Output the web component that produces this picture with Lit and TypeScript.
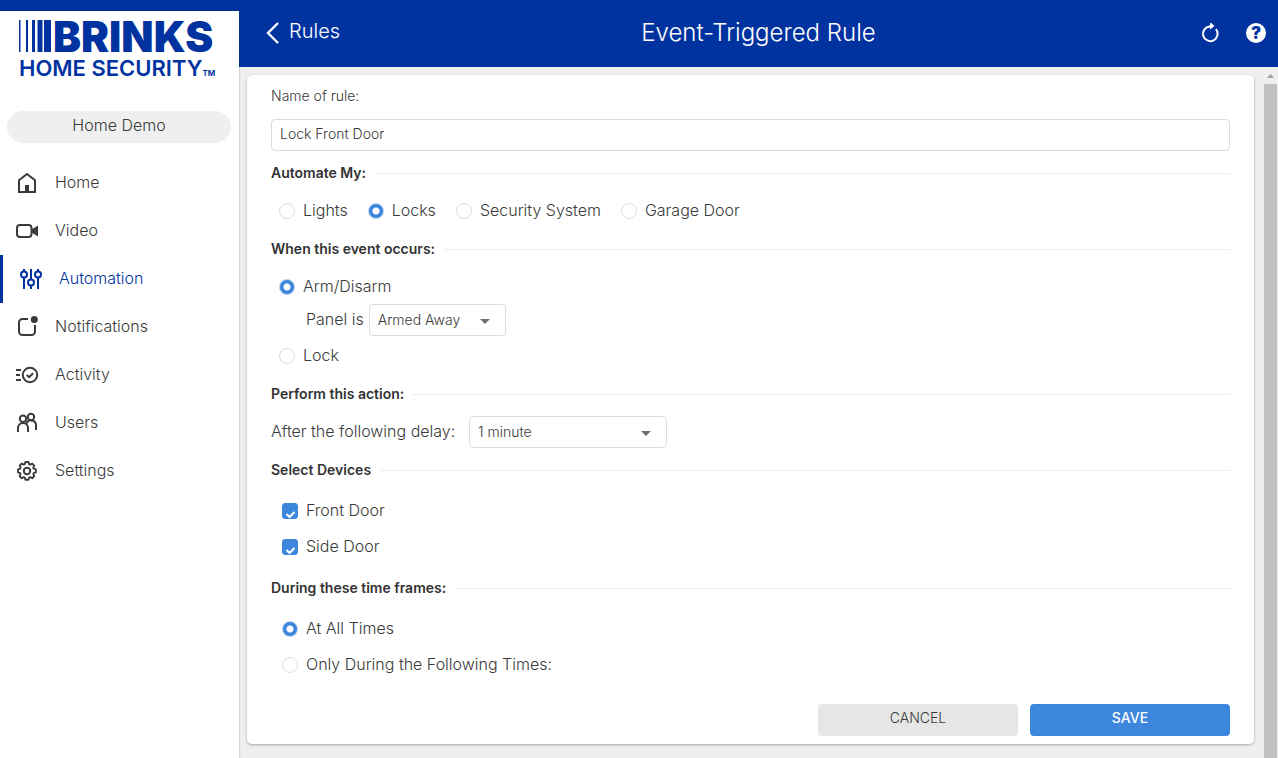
import { LitElement, html, css, svg } from "lit";
import { customElement, property, state } from "lit/decorators.js";
import { classMap } from "lit/directives/class-map.js";

const icons: Record<string, unknown> = {
  home: svg`<path d="M3 20V8.2L11 2l8 6.2V20z" fill="none" stroke="currentColor" stroke-width="2"/><path d="M9 13h4v7H9z" fill="currentColor"/>`,
  video: svg`<rect x="1" y="5" width="14.5" height="12" rx="3" fill="none" stroke="currentColor" stroke-width="2"/><path d="M15.500 9.500 22 5.500v11l-6.500-4z" fill="currentColor"/>`,
  automation: svg`<g fill="none" stroke="currentColor" stroke-width="2"><path d="M4 1v2.500M4 9.500V21M11 1v10.500M11 17.500V21M18 1v2.500M18 9.500V21"/><circle cx="4" cy="6.500" r="3"/><circle cx="11" cy="14.500" r="3"/><circle cx="18" cy="6.500" r="3"/></g>`,
  notifications: svg`<path d="M12 3H6.500A3.500 3.500 0 0 0 3 6.500v9A3.500 3.500 0 0 0 6.500 19h9a3.500 3.500 0 0 0 3.500-3.500V9" fill="none" stroke="currentColor" stroke-width="2"/><circle cx="18.300" cy="3.600" r="3.500" fill="currentColor"/>`,
  activity: svg`<g fill="none" stroke="currentColor" stroke-width="2"><path d="M0 6h5M0 11h4M0 16h5"/><circle cx="14" cy="11" r="7.200"/><path d="m10.800 11 2.300 2.200 4-4"/></g>`,
  users: svg`<g fill="none" stroke="currentColor" stroke-width="2"><circle cx="7" cy="6.800" r="3.200"/><circle cx="15" cy="5" r="3.200"/><path d="M2 20v-4a5 5 0 0 1 10 0v4M10.500 11.200A5 5 0 0 1 20 13.500V18"/></g>`,
  settings: svg`<g fill="none" stroke="currentColor" stroke-width="2" stroke-linejoin="round"><path d="M9.400 2.500h3.200l.7 2.300 1.200.5 2.100-1.100 2.200 2.200-1.100 2.100.5 1.200 2.300.7v3.200l-2.300.7-.5 1.200 1.100 2.100-2.200 2.200-2.100-1.100-1.200.5-.7 2.300H9.400l-.7-2.300-1.200-.5-2.100 1.100-2.200-2.200 1.100-2.100-.5-1.200-2.300-.7v-3.200l2.300-.7.5-1.200-1.100-2.100 2.200-2.200 2.100 1.100 1.200-.5z" transform="translate(.6 -.4) scale(.94)"/><circle cx="11" cy="11" r="3.200"/></g>`,
};

@customElement("side-nav")
export class SideNav extends LitElement {
  @property() current = "automation";

  static styles = css`
    :host { display: flex; flex-direction: column; background: #fff; box-shadow: 0 0 2px rgba(0, 0, 0, 0.35); color: #3a3a3a; }
    .logo { color: #0033a0; padding: 8px 0 0 19px; height: 60px; }
    .brand { display: flex; height: 34px; }
    .bars { flex: none; width: 34px; height: 34px; }
    .brinks { font: 900 42px/36px Inter, sans-serif; }
    .sub { display: flex; align-items: flex-end; font: 600 22px/30px Inter, sans-serif; }
    .tm { font: 700 8px/20px Inter, sans-serif; }
    .site { margin: 32px 8px 16px 7px; height: 32px; border: 0; border-radius: 16px; background: #efefef; font: inherit; color: inherit; padding: 0 0 4px; }
    .item { display: flex; align-items: center; gap: 17px; height: 48px; box-sizing: border-box; padding-left: 16px; color: inherit; text-decoration: none; }
    .item.active { border-left: 3px solid #0033a0; padding-left: 17px; color: #0033a0; }
    .icon { width: 22px; height: 22px; overflow: visible; }
    .label { padding-bottom: 2px; }
  `;

  render() {
    const items = ["Home", "Video", "Automation", "Notifications", "Activity", "Users", "Settings"];
    return html`
      <div class="logo">
        <div class="brand">
          <svg class="bars" viewBox="0 0 34 34" fill="currentColor" aria-hidden="true"><path d="M0 1h1.500v32H0zM7 1h2v32H7zM13 1h3v32h-3zM18.500 1h5v32h-5zM25 1h7v32h-7z"/></svg>
          <span class="brinks">BRINKS</span>
        </div>
        <div class="sub">HOME SECURITY<span class="tm">TM</span></div>
      </div>
      <button class="site">Home Demo</button>
      <nav>
        ${items.map((name) => {
          const id = name.toLowerCase();
          return html`<a href="#${id}" class=${classMap({ item: true, active: id === this.current })}>
            <svg class="icon" viewBox="0 0 22 22" aria-hidden="true">${icons[id]}</svg><span class="label">${name}</span>
          </a>`;
        })}
      </nav>
    `;
  }
}

@customElement("rule-form")
export class RuleForm extends LitElement {
  @state() private automate = "Locks";
  @state() private event = "Arm/Disarm";
  @state() private times = "At All Times";

  static styles = css`
    :host { display: block; background: #fff; border-radius: 5px; box-shadow: 0 1px 3px rgba(0, 0, 0, 0.3); padding: 11px 24px 8px; color: #3a3a3a; }
    .name { display: block; font-size: 14px; line-height: 20px; margin-bottom: 13px; }
    .text { display: block; width: 100%; height: 32px; box-sizing: border-box; border: 1px solid #dcdcdc; border-radius: 4px; padding: 0 8px 3px; font: inherit; font-size: 14px; color: inherit; margin-bottom: 12px; background: #fff; }
    .heading { display: flex; align-items: center; gap: 8px; margin: 0; font-size: 14px; line-height: 20px; font-weight: 600; color: #333; }
    .heading::after { content: ""; flex: 1; height: 1px; background: #eee; }
    .body { padding: 11px 8px; }
    .body.row { display: flex; flex-wrap: wrap; gap: 0 20px; }
    .body.delay { padding-left: 0; }
    .body.list { display: flex; flex-direction: column; gap: 2px; padding: 14px 11px; }
    .option { display: flex; align-items: center; gap: 8px; height: 34px; }
    .caption { padding-bottom: 3px; }
    .mark { appearance: none; flex: none; width: 16px; height: 16px; box-sizing: border-box; margin: 0; border: 1px solid #dedede; background: #fff; }
    .radio { border-radius: 50%; }
    .radio:checked { background: radial-gradient(circle, #fff 3px, #3c87dd 4px); border-color: #b5cdee; }
    .tick { display: grid; }
    .tick > * { grid-area: 1 / 1; }
    .check { border-radius: 3px; }
    .check:checked { background: #3c87dd; border-color: #3c87dd; }
    .checkmark { width: 16px; height: 16px; pointer-events: none; }
    .line { display: flex; align-items: center; gap: 5px; height: 34px; }
    .line.panel { height: 32px; padding-left: 27px; margin-bottom: 3px; }
    .delay .caption { min-width: 193px; }
    .drop { display: grid; align-items: center; }
    .drop > * { grid-area: 1 / 1; }
    .select { appearance: none; width: 137px; height: 32px; border: 1px solid #dcdcdc; border-radius: 4px; background: #fff; padding: 0 8px; font: inherit; font-size: 14px; color: inherit; }
    .wide .select { width: 198px; }
    .arrow { justify-self: end; width: 10px; height: 5px; margin: 2px 16px 0 0; fill: #707070; pointer-events: none; }
    .actions { display: flex; justify-content: flex-end; gap: 12px; margin-top: 8px; }
    .button { width: 200px; height: 32px; border: 0; border-radius: 4px; background: #e6e6e6; padding: 0 0 4px; font: inherit; font-size: 14px; color: inherit; }
    .save { background: #3c87dd; color: #fff; font-weight: 500; }
  `;

  private radio(group: string, name: string, current: string, pick: (v: string) => void) {
    return html`<label class="option">
      <input class="mark radio" type="radio" name=${group} .checked=${name === current} @change=${() => pick(name)} />
      <span class="caption">${name}</span>
    </label>`;
  }

  private arrow() {
    return html`<svg class="arrow" viewBox="0 0 10 5" aria-hidden="true"><path d="M0 0h10L5 5z"/></svg>`;
  }

  render() {
    return html`
      <label class="name" for="name">Name of rule:</label>
      <input class="text" id="name" type="text" value="Lock Front Door" />

      <h2 class="heading">Automate My:</h2>
      <div class="body row">
        ${["Lights", "Locks", "Security System", "Garage Door"].map((n) =>
          this.radio("automate", n, this.automate, (v) => (this.automate = v)))}
      </div>

      <h2 class="heading">When this event occurs:</h2>
      <div class="body">
        ${this.radio("event", "Arm/Disarm", this.event, (v) => (this.event = v))}
        <div class="line panel">
          <label class="caption" for="panel">Panel is</label>
          <span class="drop">
            <select class="select" id="panel"><option>Armed Away</option><option>Armed Stay</option><option>Disarmed</option></select>
            ${this.arrow()}
          </span>
        </div>
        ${this.radio("event", "Lock", this.event, (v) => (this.event = v))}
      </div>

      <h2 class="heading">Perform this action:</h2>
      <div class="body delay">
        <div class="line">
          <label class="caption" for="delay">After the following delay:</label>
          <span class="drop wide">
            <select class="select" id="delay"><option>1 minute</option><option>5 minutes</option></select>
            ${this.arrow()}
          </span>
        </div>
      </div>

      <h2 class="heading">Select Devices</h2>
      <div class="body list">
        ${["Front Door", "Side Door"].map((n) => html`<label class="option">
          <span class="tick">
            <input class="mark check" type="checkbox" checked />
            <svg class="checkmark" viewBox="0 0 16 16" aria-hidden="true"><path d="m4.500 11 3 3 5-5" fill="none" stroke="#fff" stroke-width="2"/></svg>
          </span>
          <span class="caption">${n}</span>
        </label>`)}
      </div>

      <h2 class="heading">During these time frames:</h2>
      <div class="body list">
        ${["At All Times", "Only During the Following Times:"].map((n) =>
          this.radio("times", n, this.times, (v) => (this.times = v)))}
      </div>

      <div class="actions">
        <button class="button">CANCEL</button>
        <button class="button save">SAVE</button>
      </div>
    `;
  }
}

@customElement("app-root")
export class AppRoot extends LitElement {
  static styles = css`
    :host { display: grid; grid-template-columns: 239px 1fr; min-height: 100vh; background: #0033a0; font: 300 16px/20px Inter, sans-serif; }
    .side { margin-top: 11px; z-index: 1; }
    .page { display: flex; flex-direction: column; min-width: 0; }
    .header { display: grid; grid-template-columns: 1fr auto 1fr; align-items: center; height: 67px; box-sizing: border-box; padding: 0 12px 2px; color: #fff; }
    .back { display: flex; align-items: center; gap: 10px; padding-left: 15px; color: inherit; text-decoration: none; font-size: 20px; }
    .back svg { width: 13px; height: 22px; }
    .back span { padding-bottom: 3px; }
    .title { margin: 0; font-size: 24px; line-height: 28px; font-weight: 300; }
    .tools { display: flex; justify-content: flex-end; align-items: center; gap: 26px; }
    .tool { display: block; border: 0; background: none; color: inherit; padding: 0; width: 20px; height: 20px; }
    .help { border-radius: 50%; background: #fff; color: #0033a0; font: 900 17px/20px Inter, sans-serif; }
    .content { flex: 1; display: flex; background: #efefef; }
    .form { flex: 1; min-width: 0; align-self: flex-start; margin: 8px 10px 14px 8px; }
    .scroll { display: flex; flex-direction: column; align-items: center; gap: 6px; width: 13px; margin-right: 1px; padding-top: 7px; }
    .up { width: 7px; height: 4px; fill: #a0a0a0; }
    .thumb { flex: 1; align-self: stretch; background: #c1c1c1; }
  `;

  render() {
    return html`
      <side-nav class="side"></side-nav>
      <div class="page">
        <header class="header">
          <a class="back" href="#rules">
            <svg viewBox="0 0 13 22" aria-hidden="true"><path d="M12 1 2 11l10 10" fill="none" stroke="currentColor" stroke-width="2.400"/></svg>
            <span>Rules</span>
          </a>
          <h1 class="title">Event-Triggered Rule</h1>
          <div class="tools">
            <button class="tool" aria-label="Refresh">
              <svg width="20" height="20" viewBox="0 0 20 20" aria-hidden="true"><path d="M16 6.200A7.300 7.300 0 1 1 10 3.500" fill="none" stroke="currentColor" stroke-width="2"/><path d="M10 -1v7.500L14.500 3z" fill="currentColor"/></svg>
            </button>
            <button class="tool help" aria-label="Help">?</button>
          </div>
        </header>
        <main class="content">
          <rule-form class="form"></rule-form>
          <div class="scroll" aria-hidden="true">
            <svg class="up" viewBox="0 0 7 4"><path d="M0 4h7L3.500 0z"/></svg>
            <div class="thumb"></div>
          </div>
        </main>
      </div>
    `;
  }
}
